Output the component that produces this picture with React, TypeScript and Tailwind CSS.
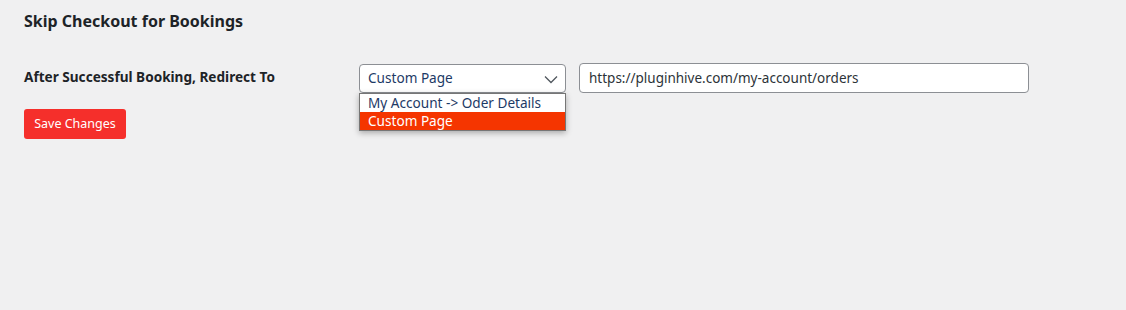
import React from "react";

const font = "font-['Noto_Sans',_'Open_Sans',_sans-serif]";

function ChevronDown() {
  return (
    <svg width="16" height="16" viewBox="0 0 16 16" className="text-[#50575e]">
      <path d="M2 5.5l6 6 6-6" fill="none" stroke="currentColor" strokeWidth="1.3" />
    </svg>
  );
}

function SelectOpen() {
  return (
    <div className="relative w-[207px]">
      <div className="flex items-center justify-between h-[29px] mt-px pl-2 pr-[6px] bg-white border border-[#8c8f94] rounded-[4px] text-[13.6px] text-[#1d3a66]">
        <span>Custom Page</span>
        <ChevronDown />
      </div>
      <div className="absolute left-0 top-[30px] w-[207px] bg-white border border-[#767676] shadow-[0_2px_6px_rgba(0,0,0,0.3)] text-[13.6px] leading-[18px] z-10">
        <div className="pl-2 text-[#1d3a66]">My Account -&gt; Oder Details</div>
        <div className="pl-2 bg-[#f53500] text-white">Custom Page</div>
      </div>
    </div>
  );
}

export default function App() {
  return (
    <div className={"w-[1126px] h-[310px] bg-[#f0f0f1] px-6 pt-[11px] " + font}>
      <h2 className="text-[16px] leading-[20px] font-bold text-[#1d2327]">
        Skip Checkout for Bookings
      </h2>
      <div className="flex items-start mt-[32px]">
        <div className="w-[335px] pt-[4px] text-[13.6px] font-bold text-[#1d2327]">
          After Successful Booking, Redirect To
        </div>
        <SelectOpen />
        <div className="ml-[13px] w-[450px] h-[30px] flex items-center px-[9px] bg-white border border-[#8c8f94] rounded-[4px] text-[13.5px] text-[#2c3338]">
          https://pluginhive.com/my-account/orders
        </div>
      </div>
      <button className="mt-4 w-[102px] h-[30px] rounded-[3px] bg-[#f52f2b] text-white text-[12.5px]">
        Save Changes
      </button>
    </div>
  );
}
